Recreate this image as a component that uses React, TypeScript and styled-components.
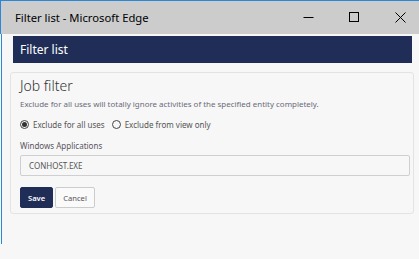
import React from "react";
import styled, { createGlobalStyle } from "styled-components";

const Global = createGlobalStyle`
  html, body { margin: 0; padding: 0; background: #f7f7f7; }
  body { font-family: "Noto Sans", "Open Sans", sans-serif; overflow: hidden; }
  * { box-sizing: border-box; }
`;

const Window = styled.div`
  width: 419px;
  height: 259px;
  display: flex;
  flex-direction: column;
  overflow: hidden;
`;

const TitleBar = styled.div`
  height: 34px;
  flex: none;
  background: #cccccc;
  border-top: 1px solid #2b88d8;
  border-left: 1px solid #2b88d8;
  display: flex;
  align-items: center;
  overflow: hidden;
`;

const TitleText = styled.div`
  flex: 1;
  padding-left: 14px;
  font-size: 11.25px;
  color: #000;
  white-space: nowrap;
`;

const Controls = styled.div`
  display: flex;
  margin-right: -4px;
  align-self: stretch;
`;

const CtrlButton = styled.div`
  width: 46px;
  display: flex;
  align-items: center;
  justify-content: center;
`;

const Viewport = styled.div`
  margin-left: 1px;
  height: 210px;
  border-left: 1px solid #2b88d8;
  display: flex;
  flex-direction: column;
`;

const Header = styled.div`
  margin: 2px 7px 0 11px;
  height: 27px;
  flex: none;
  background: #202e57;
  color: #fff;
  font-size: 12px;
  display: flex;
  align-items: center;
  padding-left: 7px;
`;

const Card = styled.div`
  margin: 9px 5px 0 8px;
  border: 1px solid #e3e3e3;
  border-radius: 3px;
  padding: 3px 3px 5px 9px;
  display: flex;
  flex-direction: column;
`;

const Heading = styled.div`
  font-size: 14px;
  font-weight: 300;
  color: #333;
  line-height: 20px;
`;

const Help = styled.div`
  font-size: 7.95px;
  color: #6a6a78;
  margin-top: 3px;
  line-height: 10px;
  white-space: nowrap;
`;

const RadioRow = styled.div`
  display: flex;
  align-items: center;
  margin-top: 10px;
  height: 10px;
  gap: 7px;
`;

const RadioLabel = styled.label`
  display: flex;
  align-items: center;
  gap: 4px;
  font-size: 8px;
  color: #555;
`;

const RadioDot = styled.span<{ $checked?: boolean }>`
  width: 9px;
  height: 9px;
  border-radius: 50%;
  border: 1px solid #444;
  display: flex;
  align-items: center;
  justify-content: center;
  &::after {
    content: "";
    width: 5px;
    height: 5px;
    border-radius: 50%;
    background: ${(p) => (p.$checked ? "#333" : "transparent")};
  }
`;

const FieldLabel = styled.div`
  font-size: 8px;
  color: #5a5560;
  margin-top: 12px;
  line-height: 10px;
`;

const Input = styled.div`
  margin-top: 4px;
  height: 21px;
  border: 1px solid #cfcfcf;
  border-radius: 2px;
  display: flex;
  align-items: center;
  padding-left: 8px;
  font-size: 8px;
  color: #555;
`;

const ButtonRow = styled.div`
  display: flex;
  gap: 2px;
  margin-top: 11px;
`;

const Button = styled.div<{ $primary?: boolean }>`
  height: 21px;
  padding: 0 7px;
  border-radius: 2px;
  display: flex;
  align-items: center;
  font-size: 7.6px;
  ${(p) =>
    p.$primary
      ? `background: #202e57; color: #fff; border: 1px solid #202e57; font-weight: 600;`
      : `background: #fafafa; color: #555; border: 1px solid #ccc;`}
`;

export default function App() {
  return (
    <>
      <Global />
      <Window>
        <TitleBar>
          <TitleText>Filter list - Microsoft Edge</TitleText>
          <Controls>
            <CtrlButton>
              <svg width="11" height="11" viewBox="0 0 11 11">
                <path d="M0.5 5.5H10.5" stroke="#000" strokeWidth="1" />
              </svg>
            </CtrlButton>
            <CtrlButton>
              <svg width="11" height="11" viewBox="0 0 11 11">
                <rect x="0.5" y="0.5" width="9" height="9" fill="none" stroke="#000" strokeWidth="1" />
              </svg>
            </CtrlButton>
            <CtrlButton>
              <svg width="11" height="11" viewBox="0 0 11 11">
                <path d="M0.5 0.5L10.5 10.5M10.5 0.5L0.5 10.5" stroke="#000" strokeWidth="1" />
              </svg>
            </CtrlButton>
          </Controls>
        </TitleBar>
        <Viewport>
          <Header>Filter list</Header>
          <Card>
            <Heading>Job filter</Heading>
            <Help>Exclude for all uses will totally ignore activities of the specified entity completely.</Help>
            <RadioRow>
              <RadioLabel>
                <RadioDot $checked />
                Exclude for all uses
              </RadioLabel>
              <RadioLabel>
                <RadioDot />
                Exclude from view only
              </RadioLabel>
            </RadioRow>
            <FieldLabel>Windows Applications</FieldLabel>
            <Input>CONHOST.EXE</Input>
            <ButtonRow>
              <Button $primary>Save</Button>
              <Button>Cancel</Button>
            </ButtonRow>
          </Card>
        </Viewport>
      </Window>
    </>
  );
}
